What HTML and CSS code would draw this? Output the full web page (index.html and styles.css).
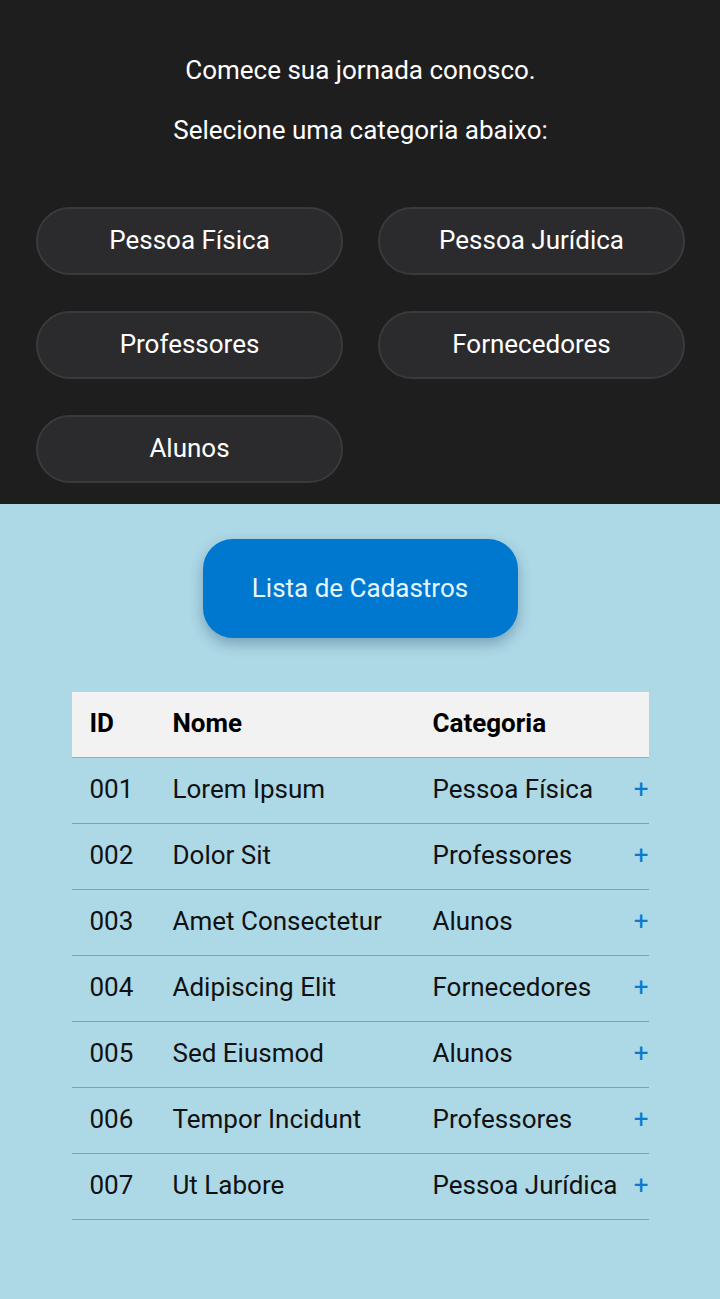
FILE: index.html
```html
<!DOCTYPE html>
<html lang="pt">
<head>
<meta charset="utf-8">
<title>Cadastro</title>
<link rel="stylesheet" href="styles.css">
</head>
<body>
<section class="intro">
  <p class="intro-line">Comece sua jornada conosco.</p>
  <p class="intro-line second">Selecione uma categoria abaixo:</p>
  <div class="cats">
    <button class="cat">Pessoa Física</button>
    <button class="cat">Pessoa Jurídica</button>
    <button class="cat">Professores</button>
    <button class="cat">Fornecedores</button>
    <button class="cat">Alunos</button>
  </div>
</section>
<main class="list">
  <button class="list-btn">Lista de Cadastros</button>
  <table class="tbl">
    <colgroup><col class="c-id"><col class="c-name"><col class="c-cat"><col class="c-plus"></colgroup>
    <thead>
      <tr><th>ID</th><th>Nome</th><th>Categoria</th><th></th></tr>
    </thead>
    <tbody>
      <tr><td>001</td><td>Lorem Ipsum</td><td>Pessoa Física</td><td class="plus">+</td></tr>
      <tr><td>002</td><td>Dolor Sit</td><td>Professores</td><td class="plus">+</td></tr>
      <tr><td>003</td><td>Amet Consectetur</td><td>Alunos</td><td class="plus">+</td></tr>
      <tr><td>004</td><td>Adipiscing Elit</td><td>Fornecedores</td><td class="plus">+</td></tr>
      <tr><td>005</td><td>Sed Eiusmod</td><td>Alunos</td><td class="plus">+</td></tr>
      <tr><td>006</td><td>Tempor Incidunt</td><td>Professores</td><td class="plus">+</td></tr>
      <tr><td>007</td><td>Ut Labore</td><td>Pessoa Jurídica</td><td class="plus">+</td></tr>
    </tbody>
  </table>
</main>
</body>
</html>
```
FILE: styles.css
```css
html, body {
  margin: 0;
  padding: 0;
}
body {
  font-family: Roboto, "Liberation Sans", sans-serif;
  background: #add8e6;
  min-height: 1299px;
}
.intro {
  background: #1e1e1e;
  padding: 55px 35px 21px 36px;
  color: #ffffff;
}
.intro-line {
  margin: 0;
  text-align: center;
  font-size: 26px;
  line-height: 30px;
}
.intro-line.second {
  margin-top: 30px;
}
.cats {
  margin-top: 62px;
  display: grid;
  grid-template-columns: 307px 307px;
  column-gap: 35px;
  row-gap: 36px;
}
.cat {
  height: 68px;
  border-radius: 34px;
  background: #2b2b2e;
  border: 2px solid #3a3a3c;
  color: #ffffff;
  font-family: Roboto, "Liberation Sans", sans-serif;
  font-size: 26px;
  padding: 0 0 2px;
}
.list {
  display: flex;
  flex-direction: column;
  align-items: center;
  padding-top: 35px;
}
.list-btn {
  width: 315px;
  height: 99px;
  border: none;
  border-radius: 30px;
  background: #0078cf;
  color: #e6f7ff;
  font-family: Roboto, "Liberation Sans", sans-serif;
  font-size: 26px;
  padding: 0 0 2px;
  box-shadow: 0 6px 14px rgba(0, 40, 80, 0.3);
}
.tbl {
  margin-top: 54px;
  width: 577px;
  table-layout: fixed;
  border-collapse: collapse;
  font-size: 26px;
  color: #111;
}
.c-id { width: 83px; }
.c-name { width: 260px; }
.c-cat { width: 219px; }
.c-plus { width: 15px; }
.tbl th, .tbl td {
  padding: 0 0 2px 18px;
  text-align: left;
  white-space: nowrap;
}
.tbl thead tr {
  background: #f2f2f2;
  height: 65px;
  border-bottom: 1px solid #8fb3c0;
}
.tbl th {
  font-weight: 700;
  color: #000;
}
.tbl tbody tr {
  height: 66px;
  border-bottom: 1px solid #7fa3b1;
}
.tbl td.plus, .tbl th:last-child {
  padding: 0 0 2px;
  text-align: right;
  color: #0a7ccf;
}
```
